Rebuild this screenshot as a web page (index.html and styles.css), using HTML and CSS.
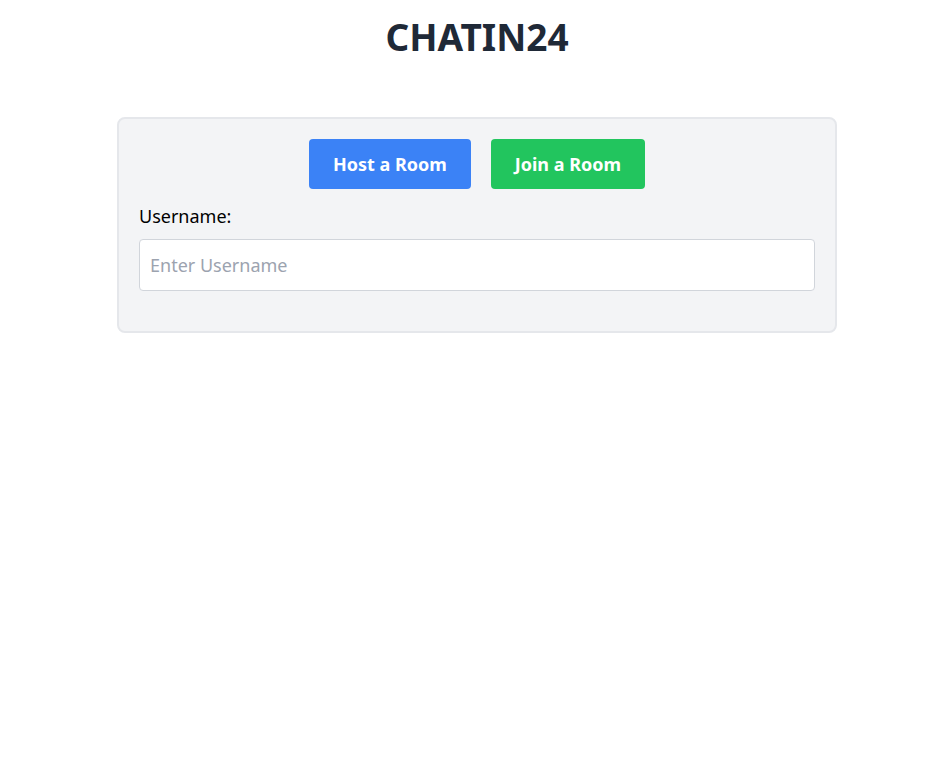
FILE: index.html
```html
<!DOCTYPE html>
<html lang="en">
<head>
<meta charset="utf-8">
<title>CHATIN24</title>
<link rel="stylesheet" href="styles.css">
</head>
<body>
<div class="page">
  <h1 class="title">CHATIN24</h1>
  <div class="card">
    <div class="actions">
      <button class="btn btn-host">Host a Room</button>
      <button class="btn btn-join">Join a Room</button>
    </div>
    <label class="label" for="username">Username:</label>
    <input class="input" id="username" type="text" placeholder="Enter Username">
  </div>
</div>
</body>
</html>
```
FILE: styles.css
```css
html, body {
  margin: 0;
  padding: 0;
  background: #ffffff;
}
body {
  font-family: "Noto Sans", "Open Sans", sans-serif;
  color: #000;
}
.page {
  padding: 0 105px 0 117px;
}
.title {
  margin: 0;
  padding-top: 14px;
  text-align: center;
  font-size: 37px;
  line-height: 46px;
  font-weight: 700;
  color: #1f2937;
}
.card {
  margin-top: 57px;
  background: #f3f4f6;
  border: 2px solid #e5e7eb;
  border-radius: 8px;
  padding: 20px 20px 40px;
  display: flex;
  flex-direction: column;
}
.actions {
  display: flex;
  justify-content: center;
  gap: 20px;
}
.btn {
  font-family: inherit;
  font-size: 18px;
  font-weight: 700;
  color: #ffffff;
  border: none;
  border-radius: 4px;
  height: 50px;
  padding: 0 24px;
  cursor: pointer;
}
.btn-host { background: #3b82f6; }
.btn-join { background: #22c55e; }
.label {
  margin-top: 14px;
  font-size: 18px;
  line-height: 27px;
}
.input {
  margin-top: 9px;
  height: 52px;
  box-sizing: border-box;
  border: 1px solid #d1d5db;
  border-radius: 4px;
  background: #fff;
  padding: 0 10px;
  font-family: inherit;
  font-size: 18px;
  color: #111827;
  outline: none;
}
.input::placeholder { color: #9ca3af; }
```
